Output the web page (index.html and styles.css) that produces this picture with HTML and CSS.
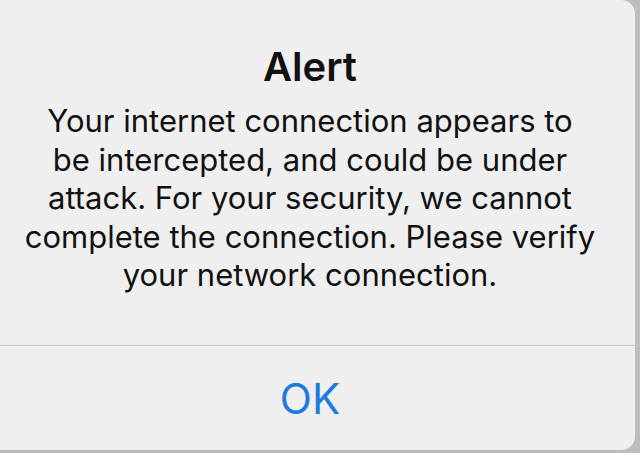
FILE: index.html
```html
<!DOCTYPE html>
<html lang="en">
<head>
    <meta charset="UTF-8">
    <meta name="viewport" content="width=device-width, initial-scale=1.0">
    <title>Alert</title>
    <link rel="stylesheet" href="styles.css">
</head>
<body>
    <div class="alert">
        <div class="alert-body">
            <h1 class="alert-title">Alert</h1>
            <p class="alert-message">Your internet connection appears to<br>be intercepted, and could be under<br>attack. For your security, we cannot<br>complete the connection. Please verify<br>your network connection.</p>
        </div>
        <button class="alert-button">OK</button>
    </div>
</body>
</html>
```

FILE: styles.css
```css
body {
    margin: 0;
    background: #bdbdbd;
    font-family: Inter, "Noto Sans", sans-serif;
    overflow: hidden;
}

.alert {
    width: 650px;
    height: 450px;
    margin-left: -15px;
    background: #efefef;
    border-radius: 14px;
    display: flex;
    flex-direction: column;
}

.alert-body {
    padding-top: 43px;
    text-align: center;
    color: #111;
    border-bottom: 1px solid #c9c9c9;
    height: 346px;
    box-sizing: border-box;
}

.alert-title {
    margin: 0;
    font-size: 40px;
    line-height: 48px;
    font-weight: 600;
}

.alert-message {
    margin: 11px 0 0;
    font-size: 31px;
    line-height: 38.5px;
}

.alert-button {
    flex: 1;
    border: none;
    background: none;
    color: #1f7ae0;
    font-family: inherit;
    font-size: 42px;
    padding: 0;
}
```
